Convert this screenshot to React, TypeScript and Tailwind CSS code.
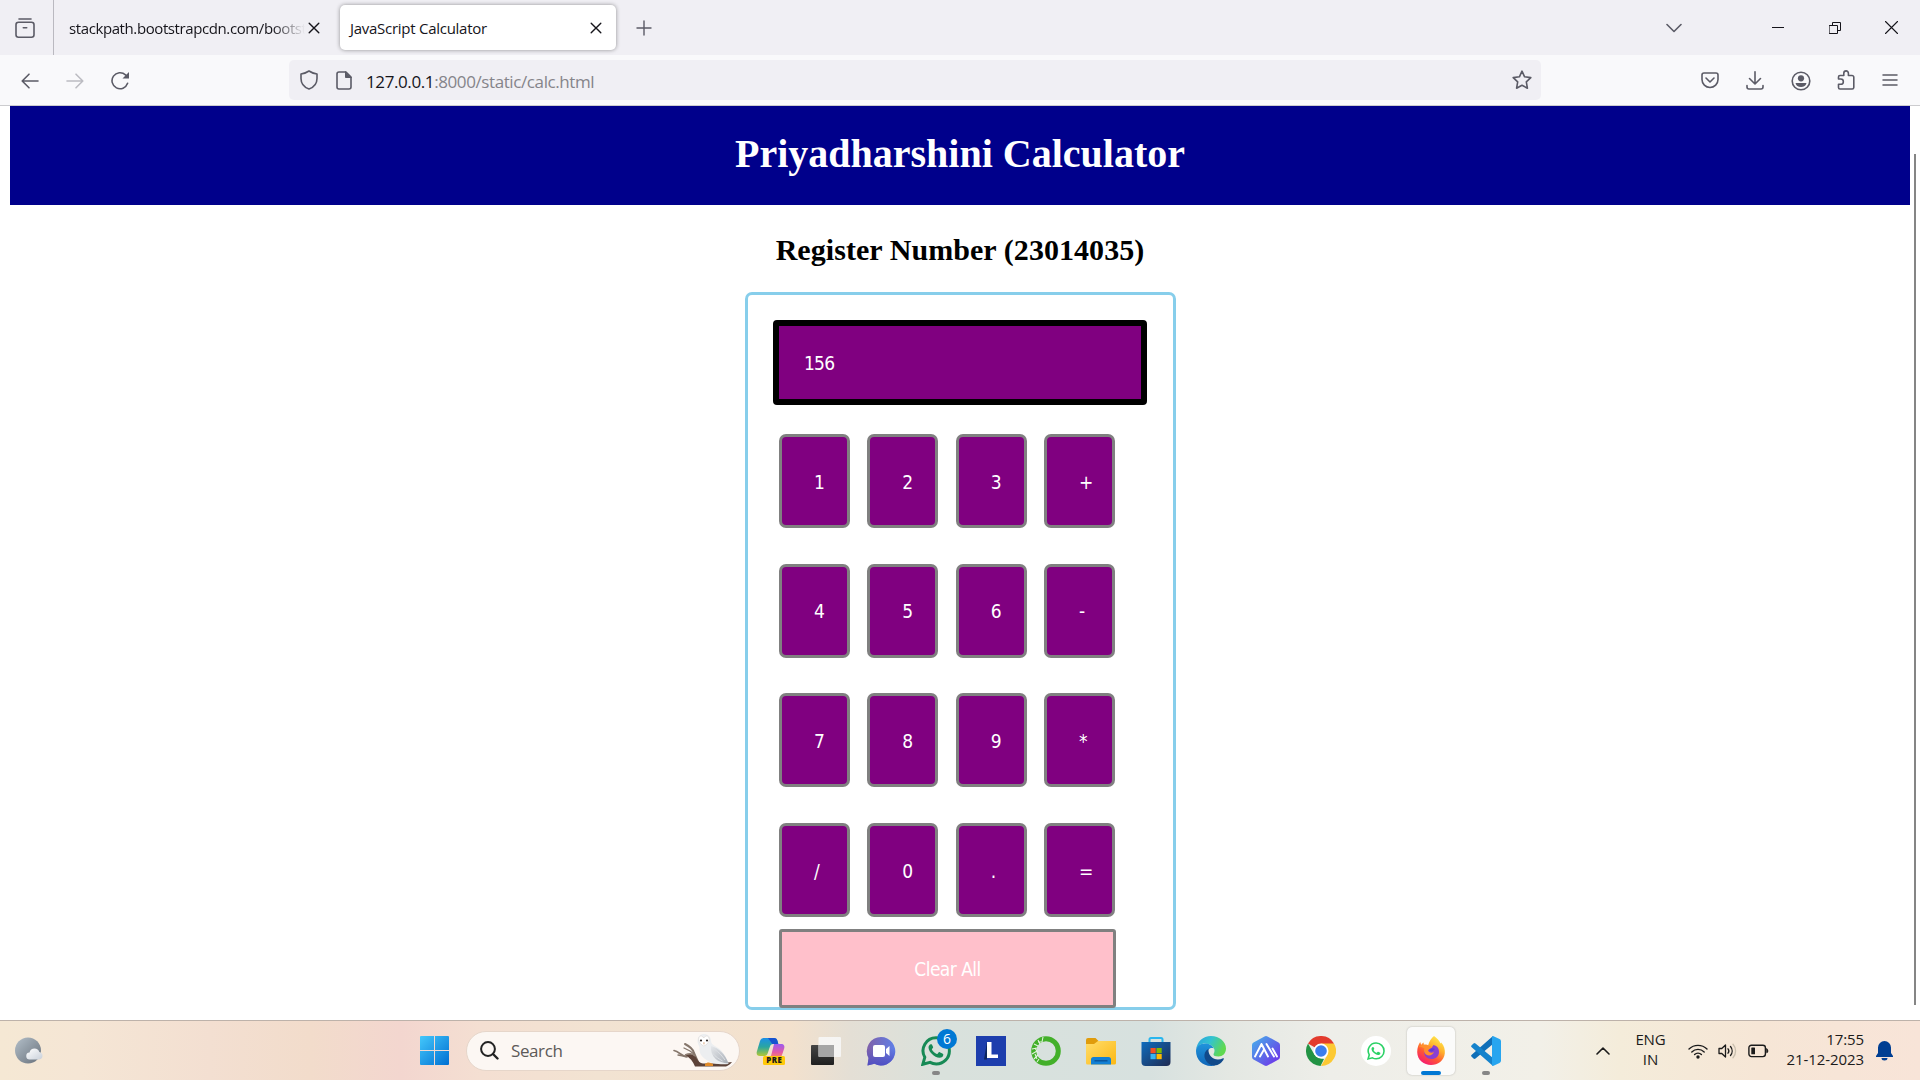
import React from 'react';

type SvgProps = { w: number; h: number; children: React.ReactNode; className?: string };

/** Outline icon drawn in its own pixel grid. */
function Ico({ w, h, children, className = '' }: SvgProps) {
  return (
    <svg
      width={w}
      height={h}
      viewBox={`0 0 ${w} ${h}`}
      fill="none"
      stroke="currentColor"
      strokeWidth="1.6"
      strokeLinecap="round"
      strokeLinejoin="round"
      className={`block shrink-0 ${className}`}
    >
      {children}
    </svg>
  );
}

/** Full-colour icon on a 30x30 grid. */
function App30({ children }: { children: React.ReactNode }) {
  return (
    <svg width="30" height="30" viewBox="0 0 30 30" className="block shrink-0">
      {children}
    </svg>
  );
}

function CloseIcon({ className = '' }: { className?: string }) {
  return (
    <Ico w={12} h={12} className={className}>
      <path d="M1.2 1.2l9.6 9.6M10.8 1.2l-9.6 9.6" strokeWidth="1.4" />
    </Ico>
  );
}

function TabBar() {
  return (
    <div className="flex h-[55px] items-center bg-[#f0eff4] text-[#15141a]">
      <div className="flex h-full w-[54px] shrink-0 items-center border-r border-[#bab9c0] pl-[15px]">
        <Ico w={20} h={20} className="text-[#5b5b66]">
          <path d="M4 1h12" />
          <rect x="1" y="4.2" width="18" height="15" rx="2.5" />
          <path d="M8.3 9.8h3.4" />
        </Ico>
      </div>
      <div className="ml-[15px] w-[236px] overflow-hidden bg-gradient-to-r from-[#15141a] from-86% to-transparent bg-clip-text pt-[2px] text-[15px] tracking-[-0.4px] whitespace-nowrap text-transparent">
        stackpath.bootstrapcdn.com/bootstrap
      </div>
      <CloseIcon className="ml-[3px]" />
      <div className="ml-[20px] flex h-[45px] w-[276px] items-center rounded-[5px] bg-white pr-[14px] pl-[10px] shadow-[0_0_4px_rgba(0,0,0,0.4)]">
        <span className="pt-[2px] text-[15px] tracking-[-0.27px] whitespace-nowrap">JavaScript Calculator</span>
        <CloseIcon className="ml-auto" />
      </div>
      <Ico w={16} h={16} className="ml-[20px] text-[#5b5b66]">
        <path d="M8 1v14M1 8h14" strokeWidth="1.4" />
      </Ico>
      <Ico w={16} h={10} className="ml-auto text-[#5b5b66]">
        <path d="M1 1.5l7 7 7-7" />
      </Ico>
      <Ico w={12} h={12} className="ml-[90px]">
        <path d="M0 5.5h12" strokeWidth="1" strokeLinecap="butt" />
      </Ico>
      <Ico w={12} h={12} className="ml-[45px]">
        <path d="M.5 3.5h8v8h-8zM3.5 3.5v-3h8v8h-3" strokeWidth="1" strokeLinejoin="miter" />
      </Ico>
      <Ico w={13} h={13} className="mr-[22px] ml-[44px]">
        <path d="M.5.5l12 12M12.5.5l-12 12" strokeWidth="1.1" />
      </Ico>
    </div>
  );
}

function NavBar() {
  return (
    <div className="flex h-[51px] items-center border-b border-[#cccccf] bg-[#f9f9fb] text-[#5b5b66]">
      <Ico w={18} h={16} className="ml-[21px] mt-px">
        <path d="M17 8H1.5M8 1.2L1.2 8 8 14.8" />
      </Ico>
      <Ico w={18} h={16} className="ml-[27px] mt-px text-[#bcbcc2]">
        <path d="M1 8h15.500M10 1.200L16.800 8 10 14.800" />
      </Ico>
      <Ico w={19} h={19} className="ml-[27px] mt-px">
        <path d="M16.600 12.300A8 8 0 1 1 14.500 3.900L17 6" />
        <path d="M18 1v6.500h-6.500z" fill="currentColor" stroke="none" />
      </Ico>
      <div className="ml-[159px] flex h-10 w-[1252px] items-center rounded-[5px] bg-[#f0eff4] pr-[9px] pl-[11px]">
        <Ico w={18} h={20}>
          <path d="M9 1c2.300 1.600 5 2.600 8 3v4.500c0 5-3.200 8.800-8 10.500-4.800-1.700-8-5.500-8-10.500V4c3-.4 5.700-1.400 8-3z" />
        </Ico>
        <Ico w={16} h={19} className="ml-[18px]">
          <path d="M3 1h7l5 5v10a2 2 0 0 1-2 2H3a2 2 0 0 1-2-2V3a2 2 0 0 1 2-2z" />
          <path d="M9.500 1v5.500H15z" fill="currentColor" strokeWidth="1" />
        </Ico>
        <span className="ml-[14px] pt-[3px] text-[17px] tracking-[-0.4px] whitespace-nowrap text-[#85848a]">
          <span className="text-[#15141a]">127.0.0.1</span>:8000/static/calc.html
        </span>
        <Ico w={20} h={20} className="ml-auto">
          <path d="M10 1.200l2.600 5.600 6.200.8-4.500 4.300 1.100 6.300L10 15.200l-5.400 3 1.100-6.300L1.200 7.600l6.200-.8z" />
        </Ico>
      </div>
      <Ico w={18} h={17} className="ml-[160px]">
        <path d="M3 1h12a2 2 0 0 1 2 2v4.500a8 8 0 0 1-16 0V3a2 2 0 0 1 2-2z" />
        <path d="M5 6l4 4 4-4" />
      </Ico>
      <Ico w={18} h={19} className="ml-[27px]">
        <path d="M9 .8v12M3.500 7.500L9 13l5.500-5.500M1 14.500v1.500a2 2 0 0 0 2 2h12a2 2 0 0 0 2-2v-1.500" />
      </Ico>
      <Ico w={20} h={20} className="ml-[27px] mt-px">
        <circle cx="10" cy="10" r="8.800" />
        <circle cx="10" cy="7.300" r="3.100" fill="currentColor" stroke="none" />
        <path d="M4.500 12h11c-.5 2.400-2.600 4-5.500 4s-5-1.600-5.500-4z" fill="currentColor" stroke="none" />
      </Ico>
      <Ico w={18} h={20} className="ml-[26px]">
        <path d="M1.500 8.500V7a1.500 1.500 0 0 1 1.500-1.500h3.800V3.200a2.300 2.300 0 0 1 4.600 0v2.300H15A1.800 1.800 0 0 1 16.800 7.300V17.500A1.600 1.600 0 0 1 15.200 19H3a1.500 1.500 0 0 1-1.500-1.500v-3.200h2.200a2.300 2.300 0 0 0 0-5.300H1.500z" />
      </Ico>
      <Ico w={16} h={14} className="ml-[27px]">
        <path d="M1 2h14M1 7h14M1 12h14" strokeWidth="1.500" />
      </Ico>
    </div>
  );
}

const rows: string[][] = [
  ['1', '2', '3', '+'],
  ['4', '5', '6', '-'],
  ['7', '8', '9', '*'],
  ['/', '0', '.', '='],
];

function Calculator() {
  return (
    <div className="mt-[25px] ml-[735px] h-[718px] w-[431px] rounded-[7px] border-[3px] border-[#87ceeb] pt-[25px] pl-[25px] font-['DejaVu_Sans_Condensed','DejaVu_Sans',sans-serif] text-[19px] text-white">
      <div className="flex h-[85px] w-[374px] items-center rounded-[4px] border-[6px] border-black bg-[#800080] pt-[2px] pl-[25px] tracking-[-0.800px]">
        156
      </div>
      <div className="mt-[29px] ml-[6px] flex flex-col gap-y-[35.670px]">
        {rows.map((row) => (
          <div key={row[0]} className="flex gap-x-[17.330px]">
            {row.map((key) => (
              <button
                key={key}
                className="flex h-[94px] w-[71px] items-center rounded-[7px] border-[3px] border-[#808080] bg-[#800080] pt-[2px] pl-[32px]"
              >
                {key}
              </button>
            ))}
          </div>
        ))}
      </div>
      <button className="mt-[12px] ml-[6px] flex h-[79px] w-[337px] items-center justify-center rounded-[3px] border-[3px] border-[#808080] bg-[#ffc0cb] pt-[2px] tracking-[-0.550px]">
        Clear All
      </button>
    </div>
  );
}

function Page() {
  return (
    <div className="flex h-[914px] justify-between overflow-hidden bg-white pl-[10px]">
      <div className="w-[1900px] shrink-0">
        <h1 className="flex h-[99px] items-center justify-center bg-[#00008b] pb-[4px] font-['Liberation_Serif',serif] text-[40px] font-bold text-white">
          Priyadharshini Calculator
        </h1>
        <h2 className="mt-[28px] text-center font-['Liberation_Serif',serif] text-[30px] leading-[34px] font-bold tracking-[0.06px] text-black">
          Register Number (23014035)
        </h2>
        <Calculator />
      </div>
      <div className="mt-[48px] mr-[4px] h-[851px] w-[2px] bg-[#858585]" />
    </div>
  );
}

function Owl() {
  return (
    <svg width="60" height="33" viewBox="0 0 60 33" className="block shrink-0">
      <defs>
        <linearGradient id="owlWing" x1="0" y1="0" x2="1" y2="1">
          <stop offset="0" stopColor="#e6e8eb" />
          <stop offset="1" stopColor="#a7adb5" />
        </linearGradient>
      </defs>
      <g fill="none" stroke="#85766b" strokeLinecap="round">
        <path d="M1 16.500c5 1 8 6 13 6.500" strokeWidth="1.600" />
        <path d="M12 10c4 2 8 5 9 9l4 9" strokeWidth="2" />
        <path d="M11 14l6 3 4 3M5 21l8 1.500" strokeWidth="1.300" />
      </g>
      <path d="M12 21c6-2 9-1 12 4 1.500 2.500 3 4 6 4.500h17l12-1.500c-1.500 2-4 4-6 4.500H22c-2-5-5-9-10-11.500z" fill="#5c4238" />
      <path d="M12 21c5-2 8-1.500 10 1" fill="none" stroke="#8d7d72" strokeWidth="1.500" />
      <path d="M24.500 7c0-4.500 3-7 6.500-7s7 2.500 7 7c0 2.500 2 4 5.500 6 7 4 9.500 10 12 17-7 1-17 0-22-4-6-4-7.500-8-7-13-1-2-2-4-2-6z" fill="#eceef0" />
      <path d="M38 12c8 2 14 8 17.500 17.500C45 29 37 23 38 12z" fill="url(#owlWing)" />
      <path d="M41 15c5 3 8 7 11 11M39.500 19c3 4 7 6 10 8" stroke="#dcdfe3" strokeWidth="1" fill="none" />
      <path d="M30.800 4c-2.500-4-6-1.500-5 2.500.6 2.500 2.800 4.500 5 5.500 2.500-1 4.800-3 5.300-5.500.8-4-2.800-6.500-5.300-2.500z" fill="#fff" stroke="#d6cfc9" strokeWidth=".5" />
      <circle cx="28" cy="6.500" r="1.100" fill="#2c2422" />
      <circle cx="34" cy="6.500" r="1.100" fill="#2c2422" />
      <path d="M30.200 8.500h1.500l-.7 2.500z" fill="#d59a66" />
      <path d="M32 30c2-2 5-2 8 0v2h-8z" fill="#e08b2a" />
    </svg>
  );
}

const Copilot = () => (
  <App30>
    <defs>
      <linearGradient id="cpA" x1="0" y1="0" x2="0" y2="1">
        <stop offset="0" stopColor="#1b8fe8" />
        <stop offset=".5" stopColor="#2aa6a0" />
        <stop offset="1" stopColor="#b4c832" />
      </linearGradient>
      <linearGradient id="cpB" x1="0" y1="0" x2="0" y2="1">
        <stop offset="0" stopColor="#9c5af0" />
        <stop offset=".6" stopColor="#e45aa5" />
        <stop offset="1" stopColor="#f78b5c" />
      </linearGradient>
    </defs>
    <path d="M8 2h10c2 0 3 1 3.500 3l.8 3h-5c-2 0-3 1-3.500 3l-2 6c-.6 2-1.500 3-3.500 3H4c-3 0-4-2-3-5l3-10c.7-2 2-3 4-3z" fill="url(#cpA)" />
    <path d="M12 2h6c2 0 3 1 3.500 3l.8 3h-6z" fill="#1752cf" />
    <path d="M18 8h7c3 0 4 2 3 5l-2 6c-.6 2-2 3-4 3h-9c2-1 2-2 2.500-4z" fill="url(#cpB)" />
    <rect x="7" y="20" width="22" height="9" rx="1.500" fill="#ffc90a" />
    <text x="18.200" y="27.300" textAnchor="middle" fontSize="7.800" fontWeight="800" letterSpacing=".5" fontFamily="Open Sans, sans-serif" fill="#1a1a1a">
      PRE
    </text>
  </App30>
);

const TaskView = () => (
  <App30>
    <defs>
      <linearGradient id="tvA" x1="0" y1="0" x2="0" y2="1">
        <stop offset="0" stopColor="#454545" />
        <stop offset="1" stopColor="#1f1f1f" />
      </linearGradient>
    </defs>
    <rect x="0" y="9" width="23" height="20" rx="1" fill="url(#tvA)" />
    <rect x="7.500" y="1" width="22.500" height="20" rx="1" fill="#f7f7f7" fillOpacity=".88" />
    <path d="M7.500 9H23v12H8.500a1 1 0 0 1-1-1z" fill="#a6a6a6" />
  </App30>
);

const Chat = () => (
  <App30>
    <defs>
      <linearGradient id="chA" x1="0" y1="0" x2="1" y2="0">
        <stop offset="0" stopColor="#8060a8" />
        <stop offset="1" stopColor="#5f7fe8" />
      </linearGradient>
      <linearGradient id="chB" x1="0" y1="0" x2="0" y2="1">
        <stop offset=".4" stopColor="#4f4fc4" stopOpacity="0" />
        <stop offset="1" stopColor="#4f4fc4" />
      </linearGradient>
    </defs>
    <path d="M15 1a14.200 14.200 0 1 1-6.500 26.800L1.500 29.500 2.500 22A14.200 14.200 0 0 1 15 1z" fill="url(#chA)" />
    <path d="M15 1a14.200 14.200 0 1 1-6.500 26.800L1.500 29.500 2.500 22A14.200 14.200 0 0 1 15 1z" fill="url(#chB)" />
    <rect x="7" y="9" width="12" height="12" rx="2" fill="#fff" />
    <path d="M20 13l3.500-3v10L20 17z" fill="#fff" />
  </App30>
);

const PHONE =
  'M9.800 8.200c-.9 0-2.300 1.300-2.300 3.300 0 2.500 2 5 3.500 6.500 2 2 5 3.800 7.500 3.800 2.200 0 3.800-1.500 3.800-3.100 0-.6-.3-.8-1-1.200l-2.500-1.300c-.6-.3-.9-.1-1.200.3l-1 1.200c-.3.4-.7.3-1.200.1-2-.9-3.500-2.300-4.400-4-.3-.4-.1-.7.200-1l.8-1.100c.2-.3.200-.6 0-1l-1.100-2.100c-.2-.4-.6-.4-1.100-.4z';

const WhatsApp = () => (
  <App30>
    <path d="M15.300 1.800a13 13 0 0 1 0 26.200c-2.200 0-4.300-.5-6.200-1.600L1.800 28.300l2-7A13 13 0 0 1 15.300 1.800z" fill="none" stroke="#178a55" strokeWidth="3" />
    <path d={PHONE} fill="#178a55" />
  </App30>
);

const LApp = () => (
  <App30>
    <rect width="30" height="30" fill="#1d3ead" />
    <path d="M11 6L8 23.500h3z" fill="#0b2560" />
    <path d="M11 6h4.500v12.500H22V22H11z" fill="#fff" />
  </App30>
);

const Anaconda = () => (
  <App30>
    <circle cx="15" cy="15" r="12.300" fill="none" stroke="#43b02a" strokeWidth="5" />
    <path
      d="M3 8l4 2M1 13l5-1M1 18l5-3M3 23l4-4M7 4l2 4M12 1l-1 5M6 26l2-3M4 12l3 5M7 6l4 0M4 18l2 5"
      fill="none"
      stroke="#e4f2df"
      strokeWidth="1.100"
    />
  </App30>
);

const Explorer = () => (
  <App30>
    <defs>
      <linearGradient id="exA" x1="0" y1="0" x2="1" y2="1">
        <stop offset="0" stopColor="#ffdd6b" />
        <stop offset="1" stopColor="#fcb814" />
      </linearGradient>
    </defs>
    <path d="M0 4a2 2 0 0 1 2-2h7.500L12.500 5v5H0z" fill="#e09c0c" />
    <path d="M0 8h8l4-3h18v22a1.500 1.500 0 0 1-1.500 1.500h-27A1.500 1.500 0 0 1 0 27z" fill="url(#exA)" />
    <path d="M5 28.500v-5a2.500 2.500 0 0 1 2.500-2.500h15a2.500 2.500 0 0 1 2.500 2.500v5z" fill="#1280d4" />
    <path d="M8.500 24.800h13" stroke="#0a4f94" strokeWidth="1.300" />
  </App30>
);

const Store = () => (
  <App30>
    <defs>
      <linearGradient id="stA" x1="0" y1="0" x2="1" y2="1">
        <stop offset="0" stopColor="#0f6cbd" />
        <stop offset="1" stopColor="#1f2b52" />
      </linearGradient>
    </defs>
    <path d="M8.500 7V3.500A1.500 1.500 0 0 1 10 2h10a1.500 1.500 0 0 1 1.500 1.500V7" fill="none" stroke="#29b6ee" strokeWidth="2" />
    <path d="M.5 6h29v20a4 4 0 0 1-4 4h-21a4 4 0 0 1-4-4z" fill="url(#stA)" />
    <rect x="9.500" y="12" width="5.200" height="5.200" fill="#f25022" />
    <rect x="15.500" y="12" width="5.200" height="5.200" fill="#7fba00" />
    <rect x="9.500" y="18" width="5.200" height="5.200" fill="#36b4f0" />
    <rect x="15.500" y="18" width="5.200" height="5.200" fill="#ffb900" />
  </App30>
);

const Edge = () => (
  <App30>
    <defs>
      <linearGradient id="edA" x1="0" y1="0" x2="1" y2=".4">
        <stop offset="0" stopColor="#2a9fe0" />
        <stop offset=".5" stopColor="#33c3d0" />
        <stop offset="1" stopColor="#5fd950" />
      </linearGradient>
      <linearGradient id="edB" x1="0" y1="0" x2="0" y2="1">
        <stop offset="0" stopColor="#2094dc" />
        <stop offset="1" stopColor="#1066b8" />
      </linearGradient>
    </defs>
    <path d="M0 14C1 5.500 7 0 15 0c8.500 0 15 6 15 12.500 0 5-3.500 8-7.500 8-3.500 0-5-1-5-2s1-1.500 1-4C18.500 11 14 7.500 9 7.500c-4 0-7.500 2.500-9 6.500z" fill="url(#edA)" />
    <path d="M0 15c0-4.500 4-7.500 9-7.500 4 0 7.500 2 8.800 5C14 11 11 14 11 18.500c0 5 3.500 9 8 10.800C17.500 30 16 30 15 30 6.500 30 0 23.500 0 15z" fill="url(#edB)" />
    <path d="M12.500 12.800C9 15 8 18 8.500 21c1 5 5.500 8.500 10 8.500 4 0 8-3.500 9.300-6.500.3-.7-.3-1-.8-.7-1.500.8-3.300 1.200-5 1.200-5.500 0-10-4-9.500-10.700z" fill="#114a8b" />
  </App30>
);

const HexApp = () => (
  <App30>
    <defs>
      <linearGradient id="hxA" x1="0" y1="0" x2="1" y2="1">
        <stop offset="0" stopColor="#45b4ec" />
        <stop offset=".5" stopColor="#5b6ee8" />
        <stop offset="1" stopColor="#7229ea" />
      </linearGradient>
    </defs>
    <path d="M13.500.5a3 3 0 0 1 3 0l11 6A3 3 0 0 1 29 9v12a3 3 0 0 1-1.500 2.500l-11 6a3 3 0 0 1-3 0l-11-6A3 3 0 0 1 1 21V9a3 3 0 0 1 1.500-2.500z" fill="url(#hxA)" />
    <path d="M4 20.500L10.500 8M9 20.500l4-7M10.500 8L17 20.500M15.500 8l7.500 12.500M21.500 12.500l4.500 8" fill="none" stroke="#fff" strokeWidth="1.900" strokeLinecap="round" strokeLinejoin="round" />
  </App30>
);

const Chrome = () => (
  <App30>
    <path d="M15 15L2 7.500A15 15 0 0 1 28 7.500z" fill="#e33b2e" />
    <path d="M15 7.500H28A15 15 0 0 1 15 30l6.500-11.200z" fill="#fcc934" />
    <path d="M2 7.500L8.500 18.800 15 22.500l3 .5L14.500 30A15 15 0 0 1 2 7.500z" fill="#229344" />
    <circle cx="15" cy="15" r="7.500" fill="#fff" />
    <circle cx="15" cy="15" r="5.800" fill="#3b7ded" />
  </App30>
);

const WhatsAppWeb = () => (
  <App30>
    <circle cx="15" cy="15" r="15" fill="#fff" />
    <g transform="translate(6 6) scale(.6)">
      <path d="M15.300 1.800a13 13 0 0 1 0 26.200c-2.200 0-4.300-.5-6.200-1.600L1.800 28.300l2-7A13 13 0 0 1 15.300 1.800z" fill="none" stroke="#2ad165" strokeWidth="2.600" />
      <path d={PHONE} fill="#2ad165" />
    </g>
  </App30>
);

const Firefox = () => (
  <App30>
    <defs>
      <linearGradient id="ffA" x1=".8" y1="0" x2=".2" y2="1">
        <stop offset="0" stopColor="#fff04f" />
        <stop offset=".35" stopColor="#ffb22c" />
        <stop offset=".65" stopColor="#ff5634" />
        <stop offset="1" stopColor="#f4137c" />
      </linearGradient>
    </defs>
    <path d="M18 0c3 2 5.500 5 6.500 7.500l.7-1c3 3 4 7.500 3.600 11C28 24.500 22 29 15 29S1.200 24 1.200 16c0-4.500 1.300-7.500 3-10l1 3c.7-1.500 1.500-2 2.500-2.500V8.500c2 0 3 0 4.500.8C13 5.500 15.500 2 18 0z" fill="url(#ffA)" />
    <path d="M17.500 9c4 1 5.500 3.500 5.500 7 0 4.500-3.500 7-7.500 7-4.500 0-7.500-3-7.300-7 .1-1.200.5-2.200 1-3 2 1.200 4 .5 5-.2 1.500-1 2.500-2.500 3.300-3.800z" fill="#8a3fd0" />
    <path d="M2.500 11c2-2 5-2.500 9-1.500 1 .3 3.500 1 4.500 1.500-1 2-3.500 2-4 3 .5 2.500 3.500 3.500 6 2-1.500 3.500-5 4.500-8 2.500C8 17 7.500 14 8.500 12.500 6.500 11 4 10.500 2.500 11z" fill="#ff8f2c" />
    <path d="M13.500 13c2-1 4-1 5.500 0-1 .8-2 2.500-4 2.500-1 0-1.500-1.200-1.500-2.500z" fill="#5b3bd8" />
  </App30>
);

const VsCode = () => (
  <App30>
    <path d="M22 0v8L4.500 22.500a1.500 1.500 0 0 1-2 0L.7 20.800a1.300 1.300 0 0 1 0-2z" fill="#0f6fb8" />
    <path d="M22 30v-8L4.500 7.500a1.500 1.500 0 0 0-2 0L.7 9.200a1.300 1.300 0 0 0 0 2z" fill="#1583cc" />
    <path d="M22 0l6.500 3A2.500 2.500 0 0 1 30 5.200v19.600a2.500 2.500 0 0 1-1.500 2.200L22 30c-.8-.4-1-1-1-2V2c0-1 .2-1.600 1-2z" fill="#27a5ef" />
  </App30>
);

type Slot = { name: string; icon: () => React.ReactElement; state?: 'open' | 'active'; badge?: string };

const slots: Slot[] = [
  { name: 'copilot', icon: Copilot },
  { name: 'task-view', icon: TaskView },
  { name: 'chat', icon: Chat },
  { name: 'whatsapp', icon: WhatsApp, state: 'open', badge: '6' },
  { name: 'l-app', icon: LApp },
  { name: 'anaconda', icon: Anaconda },
  { name: 'explorer', icon: Explorer },
  { name: 'store', icon: Store },
  { name: 'edge', icon: Edge },
  { name: 'hex', icon: HexApp },
  { name: 'chrome', icon: Chrome },
  { name: 'whatsapp-web', icon: WhatsAppWeb },
  { name: 'firefox', icon: Firefox, state: 'active' },
  { name: 'vscode', icon: VsCode, state: 'open' },
];

function TaskSlot({ slot }: { slot: Slot }) {
  const Icon = slot.icon;
  return (
    <div className="flex w-[55px] justify-center">
      <div
        className={`relative flex h-12 w-12 items-center justify-center rounded-[5px] ${
          slot.state === 'active' ? 'bg-[#fbfbfa] shadow-[0_0_2px_rgba(0,0,0,0.25)]' : ''
        }`}
      >
        <Icon />
        {slot.badge && (
          <span className="absolute top-[2px] left-[25px] flex h-5 w-5 items-center justify-center rounded-full bg-[#0078d4] text-[14px] leading-none text-white">
            {slot.badge}
          </span>
        )}
        {slot.state === 'open' && <span className="absolute bottom-0 left-5 h-1 w-2 rounded-full bg-[#868686]" />}
        {slot.state === 'active' && <span className="absolute bottom-0 left-[14px] h-1 w-5 rounded-full bg-[#0078d4]" />}
      </div>
    </div>
  );
}

function Taskbar() {
  return (
    <div className="flex h-[60px] items-center border-t border-[#bdb2aa] bg-[linear-gradient(90deg,#f5e8d4_0px,#f5e6d5_80px,#f3dfd1_210px,#f2dccb_310px,#f3d6cf_400px,#f4dfd2_480px,#f2e3d2_600px,#f3e1cd_790px,#e4dfd5_850px,#d9e1dc_940px,#d7e1df_1150px,#e4e8e3_1230px,#eeeee9_1330px,#f2f0e8_1540px,#f4ecda_1620px,#f6e6d6_1760px,#f8e4d8_1920px)] text-[#1b1b1b]">
      <svg width="30" height="28" viewBox="0 0 30 28" className="ml-[15px] block shrink-0">
        <defs>
          <linearGradient id="moon" x1="0" y1="0" x2="1" y2="1">
            <stop offset="0" stopColor="#b3bfc9" />
            <stop offset="1" stopColor="#68717b" />
          </linearGradient>
          <linearGradient id="cloud" x1="0" y1="0" x2="1" y2="1">
            <stop offset="0" stopColor="#ffffff" />
            <stop offset="1" stopColor="#c9d0da" />
          </linearGradient>
        </defs>
        <circle cx="13" cy="13.500" r="13" fill="url(#moon)" />
        <path d="M15 22.500a3.500 3.500 0 0 1-.5-7c.5-2.500 2.500-4 5-4s4.300 1.500 4.800 3.500a3.800 3.800 0 0 1 0 7.500z" fill="url(#cloud)" />
      </svg>
      <svg width="29" height="29" viewBox="0 0 29 29" className="ml-[375px] block shrink-0">
        <defs>
          <linearGradient id="win" x1="0" y1="0" x2="1" y2="1">
            <stop offset="0" stopColor="#44c8fb" />
            <stop offset="1" stopColor="#006fd2" />
          </linearGradient>
        </defs>
        <path d="M1 0h13v14H0V1a1 1 0 0 1 1-1zM15 0h13a1 1 0 0 1 1 1v13H15zM0 15h14v14H1a1 1 0 0 1-1-1zM15 15h14v13a1 1 0 0 1-1 1H15z" fill="url(#win)" />
      </svg>
      <div className="ml-[17px] flex h-[40px] w-[274px] items-center rounded-full border border-[#e6d6ca] bg-[#fcf7f3] pr-[6px] pl-[13px]">
        <Ico w={19} h={19} className="text-[#222]">
          <circle cx="8" cy="8" r="6.900" strokeWidth="2" />
          <path d="M13 13l4.500 4.500" strokeWidth="2.400" />
        </Ico>
        <span className="ml-[12px] text-[17px] tracking-[-0.400px] text-[#5d5a58]">Search</span>
        <div className="ml-auto">
          <Owl />
        </div>
      </div>
      <div className="ml-[3.500px] flex">
        {slots.map((s) => (
          <TaskSlot key={s.name} slot={s} />
        ))}
      </div>
      <Ico w={14} h={8} className="ml-[82px]">
        <path d="M1 7l6-6 6 6" />
      </Ico>
      <div className="ml-[21px] w-[40px] pb-[3px] text-center text-[15px] leading-5 tracking-[-0.100px]">
        ENG
        <br />
        IN
      </div>
      <Ico w={20} h={16} className="ml-[17px]">
        <path d="M1 6a13 13 0 0 1 18 0M3.800 8.900a9 9 0 0 1 12.400 0M6.600 11.600a5 5 0 0 1 6.800 0" strokeWidth="1.400" />
        <circle cx="10" cy="14" r="1.700" fill="currentColor" stroke="none" />
      </Ico>
      <Ico w={20} h={16} className="ml-[10px]">
        <path d="M1 5.500h2.800L7.500 2v12l-3.700-3.500H1zM10 5.800a3.500 3.500 0 0 1 0 4.400M12.500 3.500a7 7 0 0 1 0 9" strokeWidth="1.300" />
        <path d="M15 1.300a10 10 0 0 1 0 13.400" stroke="#c9bfae" strokeWidth="1.300" />
      </Ico>
      <Ico w={21} h={14} className="ml-[10px]">
        <rect x=".9" y="1.200" width="16.500" height="11.400" rx="2.500" strokeWidth="1.400" />
        <rect x="3.300" y="3.500" width="3.700" height="6.800" rx=".6" fill="currentColor" stroke="none" />
        <path d="M18.800 5v3.800c1.400-.3 1.400-3.500 0-3.800z" fill="currentColor" strokeWidth="1" />
      </Ico>
      <div className="ml-auto pb-[4px] text-right text-[15px] leading-5 tracking-[-0.080px]">
        17:55
        <br />
        21-12-2023
      </div>
      <svg width="17" height="20" viewBox="0 0 17 20" className="mr-[27px] ml-[12px] block shrink-0">
        <path d="M8.500 0a6.500 6.500 0 0 1 6.500 6.500V12l2 3v1H0v-1l2-3V6.500A6.500 6.500 0 0 1 8.500 0zM5.500 17h6a3 2.500 0 0 1-6 0z" fill="#003e92" />
      </svg>
    </div>
  );
}

export default function App() {
  return (
    <div className="flex h-[1080px] w-[1920px] flex-col overflow-hidden bg-white font-['Open_Sans','Noto_Sans',sans-serif]">
      <TabBar />
      <NavBar />
      <Page />
      <Taskbar />
    </div>
  );
}
